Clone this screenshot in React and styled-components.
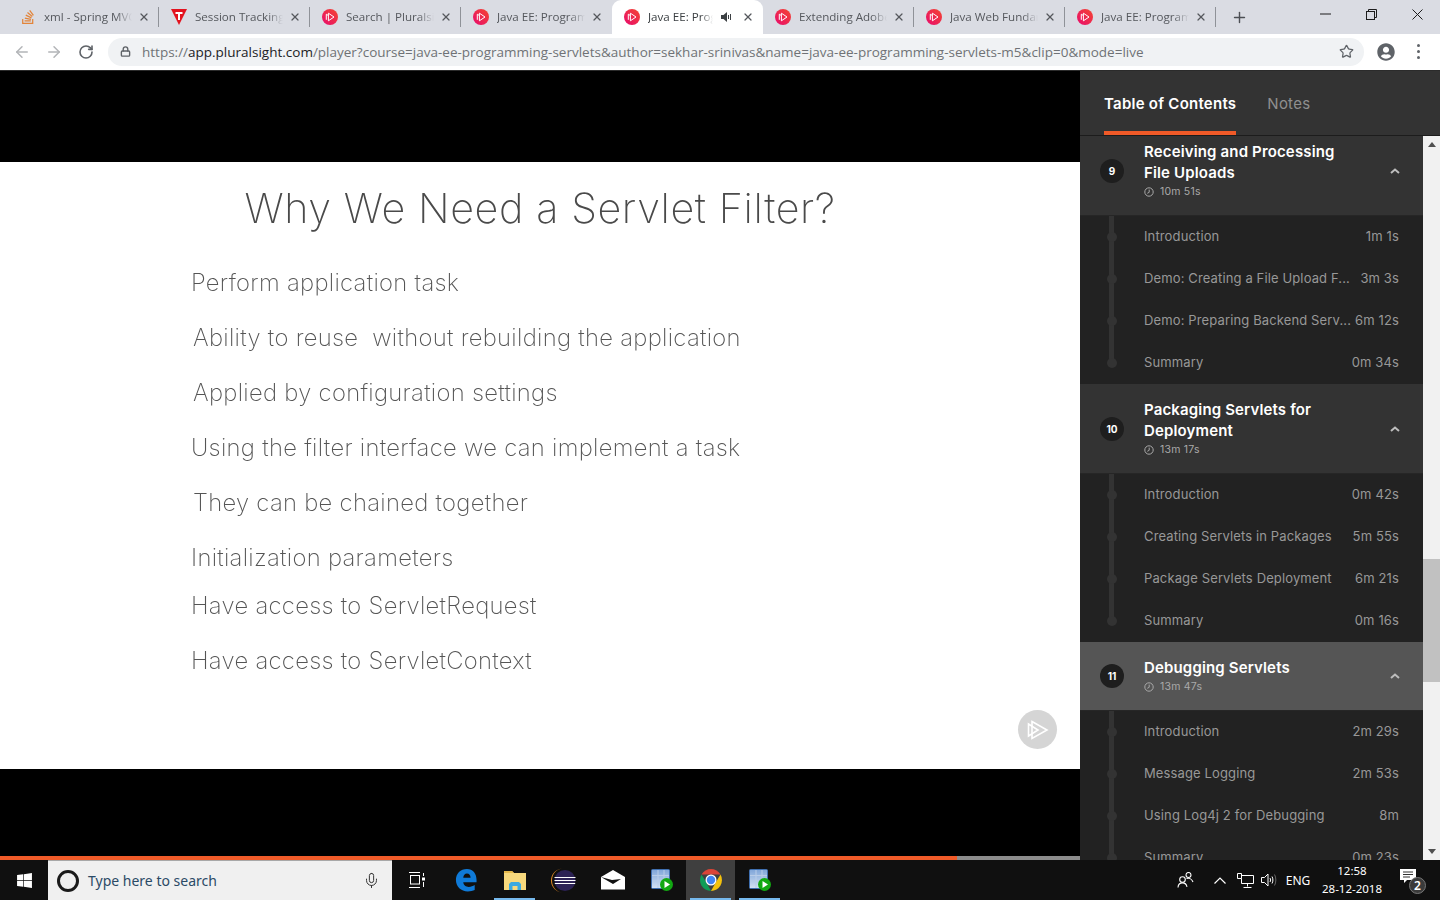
import React from "react";
import styled, { createGlobalStyle } from "styled-components";
import { ArrowLeft, ArrowRight, RotateCw, Lock, Star, Plus, X, Mic } from "lucide-react";
import { FaStackOverflow, FaWindows, FaUserCircle } from "react-icons/fa";

const GlobalStyle = createGlobalStyle`
  html, body {
    margin: 0;
    padding: 0;
    width: 1440px;
    height: 900px;
    overflow: hidden;
    background: #000;
  }
  * { box-sizing: border-box; }
`;

const Page = styled.div`
  width: 1440px;
  height: 900px;
  display: flex;
  flex-direction: column;
`;

/* browser chrome */
const TabStrip = styled.div`
  height: 34px;
  background: #dadce3;
  display: flex;
  padding-left: 8px;
  font-family: "Open Sans", "Noto Sans", sans-serif;
`;

const Tab = styled.div`
  position: relative;
  width: 151px;
  height: 34px;
  flex: none;
  display: flex;
  align-items: center;
  padding-left: 12px;
  background: ${(p) => (p.$active ? "#fff" : "transparent")};
  border-radius: 9px 9px 0 0;
  &::after {
    content: "";
    position: absolute;
    right: 0;
    top: 7px;
    height: 20px;
    width: 1px;
    background: ${(p) => (p.$sep ? "#8f9298" : "transparent")};
  }
`;

const TabIcon = styled.span`
  width: 16px;
  height: 16px;
  flex: none;
  display: flex;
  align-items: center;
  justify-content: center;
`;

const TabTitle = styled.span`
  margin: -2px 0 0 8px;
  width: ${(p) => (p.$active ? "65px" : "88px")};
  font-size: 11.6px;
  color: ${(p) => (p.$active ? "#3c4043" : "#55585d")};
  white-space: nowrap;
  overflow: hidden;
  -webkit-mask-image: linear-gradient(to right, #000 82%, transparent 100%);
  mask-image: linear-gradient(to right, #000 82%, transparent 100%);
`;

const TabAudio = styled.span`
  margin-left: 8px;
  width: 14px;
  display: flex;
`;

const TabClose = styled.span`
  margin-left: ${(p) => (p.$active ? "7px" : "6px")};
  display: flex;
  color: #55585d;
`;

const NewTab = styled.div`
  width: 46px;
  display: flex;
  align-items: center;
  justify-content: center;
  color: #4c4f54;
`;

const WindowControls = styled.div`
  margin-left: auto;
  display: flex;
`;

const WindowButton = styled.div`
  width: 46px;
  height: 28px;
  display: flex;
  align-items: center;
  justify-content: center;
  color: #1c1c1c;
`;

const Toolbar = styled.div`
  height: 37px;
  background: #fff;
  border-bottom: 1px solid #2b2b2b;
  display: flex;
  align-items: center;
  padding: 0 0 1px 6px;
  color: #5f6368;
`;

const NavButton = styled.div`
  width: 32px;
  height: 28px;
  display: flex;
  align-items: center;
  justify-content: center;
  color: ${(p) => (p.$dim ? "#b3b5b8" : "#5f6368")};
`;

const Omnibox = styled.div`
  margin-left: 6px;
  width: 1256px;
  height: 28px;
  border-radius: 14px;
  background: #f0f2f4;
  display: flex;
  align-items: center;
  padding: 0 10px 0 12px;
`;

const Url = styled.div`
  margin-left: 11px;
  font-family: "Open Sans", "Noto Sans", sans-serif;
  font-size: 13.5px;
  color: #6f7276;
  white-space: nowrap;
  b {
    font-weight: 400;
    color: #202124;
  }
`;

const ToolbarEnd = styled.div`
  margin-left: auto;
  display: flex;
  align-items: center;
`;

const ProfileSlot = styled.div`
  margin-left: 6px;
  width: 32px;
  display: flex;
  justify-content: center;
  color: #5f6368;
`;

const MenuDots = styled.div`
  width: 32px;
  display: flex;
  flex-direction: column;
  align-items: center;
  gap: 3px;
  i {
    width: 3px;
    height: 3px;
    border-radius: 50%;
    background: #5f6368;
  }
`;

/* player */
const Main = styled.div`
  flex: 1;
  min-height: 0;
  display: flex;
`;

const Player = styled.div`
  width: 1080px;
  display: flex;
  flex-direction: column;
  background: #000;
`;

const Slide = styled.div`
  position: relative;
  margin-top: 91px;
  height: 607px;
  background: #fff;
  padding-top: 19px;
  font-family: Inter, Lato, sans-serif;
  font-weight: 300;
`;

const SlideTitle = styled.h1`
  margin: 0 0 20px;
  text-align: center;
  font-size: 41.3px;
  line-height: 54px;
  font-weight: 200;
  letter-spacing: 0.6px;
  color: #4a4a4a;
  filter: blur(0.3px);
`;

const Bullet = styled.div`
  height: ${(p) => p.$h || 55}px;
  line-height: 55px;
  padding-left: ${(p) => p.$x}px;
  font-size: 23.8px;
  font-weight: 200;
  letter-spacing: 0.3px;
  color: #555;
  white-space: pre;
  filter: blur(0.3px);
`;

const PlayBadge = styled.div`
  position: absolute;
  right: 23px;
  top: 548px;
  width: 39px;
  height: 39px;
  border-radius: 50%;
  background: #d5d5d5;
  display: flex;
  align-items: center;
  justify-content: center;
`;

const Progress = styled.div`
  margin-top: auto;
  height: 4px;
  background: #8c8c8c;
`;

const ProgressFill = styled.div`
  height: 100%;
  background: #f05a28;
`;

/* sidebar */
const Sidebar = styled.aside`
  width: 360px;
  display: flex;
  flex-direction: column;
  background: #222;
  font-family: Inter, "Noto Sans", sans-serif;
`;

const SideTabs = styled.div`
  height: 65px;
  flex: none;
  background: #333;
  border-bottom: 1px solid #1c1c1c;
  display: flex;
  padding-left: 24px;
  gap: 31px;
`;

const SideTab = styled.div`
  height: 64px;
  line-height: 65px;
  font-size: 15px;
  letter-spacing: 0.25px;
  font-weight: ${(p) => (p.$active ? 600 : 400)};
  color: ${(p) => (p.$active ? "#fff" : "#8f8f8f")};
  border-bottom: 4px solid ${(p) => (p.$active ? "#f05a28" : "transparent")};
`;

const SideBody = styled.div`
  flex: 1;
  min-height: 0;
  display: flex;
`;

const SectionList = styled.div`
  width: 343px;
  overflow: hidden;
`;

const SectionScroll = styled.div`
  margin-top: -10px;
`;

const SectionHead = styled.div`
  height: ${(p) => (p.$lines === 2 ? 90 : 69)}px;
  background: ${(p) => (p.$active ? "#555" : "#333")};
  border-bottom: 1px solid #262626;
  display: flex;
  align-items: center;
  padding-right: 24px;
`;

const SectionBadge = styled.div`
  margin-left: 20px;
  width: 24px;
  height: 24px;
  flex: none;
  border-radius: 50%;
  background: #1e1e1e;
  color: #fff;
  font-size: 10px;
  font-weight: 700;
  display: flex;
  align-items: center;
  justify-content: center;
`;

const SectionText = styled.div`
  margin-left: 20px;
  flex: 1;
`;

const SectionTitle = styled.div`
  font-size: 15px;
  line-height: 21px;
  letter-spacing: 0.15px;
  font-weight: 600;
  color: #fff;
`;

const SectionTime = styled.div`
  height: 18px;
  display: flex;
  align-items: center;
  gap: 6px;
  font-size: 10.5px;
  letter-spacing: 0.2px;
  color: #a9a9a9;
`;

const Chevron = styled.svg`
  flex: none;
  margin-right: -1px;
`;

const LessonRow = styled.div`
  position: relative;
  height: 42px;
  display: flex;
  align-items: center;
  justify-content: space-between;
  padding: 0 24px 2px 64px;
  background: #222;
  font-size: 13px;
  letter-spacing: 0.13px;
  color: #989898;
  white-space: nowrap;
  &::before {
    content: "";
    position: absolute;
    left: 29px;
    top: 0;
    width: 5px;
    height: ${(p) => (p.$last ? "50%" : "100%")};
    background: #333;
  }
  &::after {
    content: "";
    position: absolute;
    left: 27px;
    top: 16px;
    width: 10px;
    height: 10px;
    border-radius: 50%;
    background: #333;
  }
`;

const Scrollbar = styled.div`
  width: 17px;
  background: #f1f1f1;
  display: flex;
  flex-direction: column;
  align-items: center;
`;

const ScrollArrow = styled.div`
  height: 17px;
  flex: none;
  display: flex;
  align-items: center;
  justify-content: center;
`;

const ScrollThumb = styled.div`
  width: 100%;
  height: 123px;
  margin-top: 406px;
  background: #c1c1c1;
`;

const ScrollEnd = styled.div`
  margin-top: auto;
`;

/* windows taskbar */
const Taskbar = styled.div`
  height: 40px;
  flex: none;
  background: #101010;
  display: flex;
  color: #fff;
  font-family: "Noto Sans", "Open Sans", sans-serif;
`;

const StartButton = styled.div`
  width: 48px;
  display: flex;
  align-items: center;
  justify-content: center;
`;

const SearchBox = styled.div`
  width: 344px;
  background: #f0f0f0;
  border-top: 1px solid #a8a8a8;
  display: flex;
  align-items: center;
  padding: 0 12px 0 9px;
  color: #2b4a66;
  font-size: 14px;
`;

const Cortana = styled.div`
  width: 22px;
  height: 22px;
  border-radius: 50%;
  border: 3px solid #1a1a1a;
  margin-right: 9px;
`;

const SearchMic = styled.div`
  margin-left: auto;
  display: flex;
  color: #333;
`;

const Apps = styled.div`
  display: flex;
`;

const AppSlot = styled.div`
  position: relative;
  width: 49px;
  display: flex;
  align-items: center;
  justify-content: center;
  background: ${(p) => (p.$focus ? "#3f3f3f" : "transparent")};
  &::after {
    content: "";
    position: absolute;
    left: ${(p) => (p.$open ? "4px" : "50%")};
    right: ${(p) => (p.$open ? "4px" : "50%")};
    bottom: 0;
    height: 2px;
    background: #76b9ed;
  }
`;

const Tray = styled.div`
  margin-left: auto;
  display: flex;
  align-items: center;
  padding-right: 4px;
  font-size: 12px;
`;

const TraySlot = styled.div`
  width: ${(p) => p.$w}px;
  display: flex;
  justify-content: center;
  align-items: center;
`;

const Clock = styled.div`
  width: 80px;
  text-align: center;
  font-size: 11.5px;
  line-height: 18px;
  margin-top: -1px;
`;

const Notify = styled.div`
  position: relative;
  width: 40px;
  height: 22px;
  margin-left: 4px;
`;

const NotifyCount = styled.span`
  position: absolute;
  left: 13px;
  top: 8px;
  width: 17px;
  height: 17px;
  border-radius: 50%;
  background: #3a3a3a;
  border: 1px solid #777;
  font-size: 12px;
  font-weight: 600;
  line-height: 15px;
  text-align: center;
`;

const PsLogo = ({ id }) => (
  <svg width="16" height="16" viewBox="0 0 16 16">
    <defs>
      <linearGradient id={id} x1="0" y1="1" x2="1" y2="0">
        <stop offset="0" stopColor="#e80a6e" />
        <stop offset="1" stopColor="#f4472f" />
      </linearGradient>
    </defs>
    <circle cx="8" cy="8" r="8" fill={`url(#${id})`} />
    <path d="M6.4 4.2 12 8l-5.6 3.8zM4.3 5.2 6 6.3M4.3 5.2v5.6" fill="none" stroke="#fff" strokeWidth="1" />
  </svg>
);

const TutorialsLogo = () => (
  <svg width="16" height="16" viewBox="0 0 16 16">
    <path d="M0 0h16L8 16z" fill="#e3131f" />
    <path d="M4.5 3h7v2H9v6H7V5H4.5z" fill="#fff" />
  </svg>
);

const Speaker = () => (
  <svg width="12" height="12" viewBox="0 0 12 12" fill="#3c4043">
    <path d="M0 4h2.5L6 1v10L2.5 8H0z" />
    <path d="M7.5 4v4M9.5 3v6" stroke="#3c4043" fill="none" />
  </svg>
);

const TaskView = () => (
  <svg width="18" height="16" viewBox="0 0 18 16" fill="none" stroke="#fff">
    <path d="M1 .5h11M1 15.5h11" />
    <rect x="2.5" y="3.5" width="9" height="8.5" />
    <path d="M15.5 1v3" />
    <rect x="14" y="5.5" width="3" height="3" fill="#fff" stroke="none" />
    <path d="M15.5 10v5" />
  </svg>
);

const EdgeIcon = () => (
  <svg width="22" height="24" viewBox="0 0 24 26">
    <path
      fillRule="evenodd"
      fill="#0f7ad8"
      d="M1 13C1 6 6 1 13 1c6.500 0 10.500 5 10.500 12v2.500H9c.3 3.500 3 5 6 5 2.500 0 4.500-.7 6.500-2v5.500c-2 1-4.500 1.500-7.500 1.500C6.500 25.500 1 20 1 13zM9 10.500h8c0-2.500-1.500-4.500-4-4.500-2.300 0-3.800 2-4 4.500z"
    />
  </svg>
);

const FolderIcon = () => (
  <svg width="24" height="22" viewBox="0 0 24 22">
    <path d="M1 2h8l2 2h12v17H1z" fill="#f7d87c" />
    <path d="M1 2h8l2 2H1z" fill="#e5b84a" />
    <path d="M6 21v-6l2-2h8l2 2v6h-3.500v-4h-5v4z" fill="#3aa9e0" />
  </svg>
);

const EclipseIcon = () => (
  <svg width="25" height="25" viewBox="0 0 25 25">
    <path d="M12 0.500a12 12 0 0 0 0 24a11 12 0 0 1 0-24z" fill="#e58a24" />
    <circle cx="14" cy="12.500" r="10.500" fill="#2c2255" />
    <path d="M3.500 9.500h21M3.500 12.500h21M3.800 15.500h20.400" stroke="#fff" strokeWidth="1.200" />
  </svg>
);

const MailIcon = () => (
  <svg width="24" height="20" viewBox="0 0 24 20">
    <path d="M0 7 12 0l12 7v12.500H0z" fill="#fff" />
    <path d="M0 7l12 7 8-5-9 1z" fill="#111" />
  </svg>
);

const TableApp = ({ id }) => (
  <svg width="22" height="23" viewBox="0 0 22 23">
    <defs>
      <linearGradient id={id} x1="0" y1="0" x2="0" y2="1">
        <stop offset="0" stopColor="#7fa5d8" />
        <stop offset="1" stopColor="#d5e2f3" />
      </linearGradient>
    </defs>
    <rect x="0.500" y="0.500" width="18" height="19" rx="1" fill={`url(#${id})`} stroke="#3f6fb0" />
    <path d="M1 6.500h17M1 12h17M7 1v18M13 1v18" stroke="#b9cde8" />
    <circle cx="15.500" cy="15.500" r="6.500" fill="#12a812" />
    <path d="M13.500 12 19 15.500 13.500 19z" fill="#fff" />
  </svg>
);

const ChromeIcon = () => (
  <svg width="24" height="24" viewBox="0 0 24 24">
    <path d="M2.500 6.500a11 11 0 0 1 19 0H12z" fill="#db4437" />
    <path d="M21.500 6.500A11 11 0 0 1 12 23l5-9z" fill="#f4c20d" />
    <path d="M12 23A11 11 0 0 1 2.500 6.500L7 14z" fill="#0f9d58" />
    <circle cx="12" cy="12" r="5.500" fill="#fff" />
    <circle cx="12" cy="12" r="4.200" fill="#4285f4" />
  </svg>
);

const PeopleIcon = () => (
  <svg width="17" height="16" viewBox="0 0 17 16" fill="none" stroke="#fff" strokeWidth="1.100">
    <circle cx="5.500" cy="7.500" r="2.800" />
    <path d="M1 15.500c.2-2.800 2-4.600 4.500-4.600s4 1.500 4.500 4" />
    <circle cx="11.500" cy="3" r="2.500" />
    <path d="M9.500 6.500c2.800-.8 5.500.8 6.500 3.500" />
  </svg>
);

const NetworkIcon = () => (
  <svg width="17" height="15" viewBox="0 0 17 15" fill="none" stroke="#fff">
    <path d="M4.500 2.500h12v8h-12" />
    <path d="M.5.500h4v5h-4zM4.500 10.500V5.500M10.500 10.500v3M6.500 14.500h8" />
  </svg>
);

const VolumeIcon = () => (
  <svg width="17" height="14" viewBox="0 0 17 14" fill="none" stroke="#fff">
    <path d="M.5 4.500h3l3.500-3.500v12L3.500 9.500h-3z" />
    <path d="M9 5c.7 1.200.7 2.800 0 4M11 3.500c1.200 2 1.200 5 0 7" />
    <path d="M13.500 1.500c1.800 3 1.800 8 0 11" stroke="#666" />
  </svg>
);

const Clockface = ({ stroke }) => (
  <svg width="10" height="10" viewBox="0 0 10 10" fill="none" stroke={stroke}>
    <circle cx="5" cy="5" r="4.200" />
    <path d="M5.200 2.600V5.300L3.300 6.300" />
  </svg>
);

const tabs = [
  { title: "xml - Spring MVC", icon: "so", sep: true },
  { title: "Session Tracking", icon: "tp", sep: true },
  { title: "Search | Pluralsight", icon: "ps", sep: true },
  { title: "Java EE: Programming", icon: "ps" },
  { title: "Java EE: Programming", icon: "ps", active: true },
  { title: "Extending Adobe", icon: "ps", sep: true },
  { title: "Java Web Fundamentals", icon: "ps", sep: true },
  { title: "Java EE: Programming", icon: "ps", sep: true },
];

const bullets = [
  { text: "Perform application task", x: 191 },
  { text: "Ability to reuse  without rebuilding the application", x: 193 },
  { text: "Applied by configuration settings", x: 193 },
  { text: "Using the filter interface we can implement a task", x: 191 },
  { text: "They can be chained together", x: 193 },
  { text: "Initialization parameters", x: 191, h: 48 },
  { text: "Have access to ServletRequest", x: 191 },
  { text: "Have access to ServletContext", x: 191 },
];

const sections = [
  {
    n: 9,
    title: ["Receiving and Processing", "File Uploads"],
    time: "10m 51s",
    lessons: [
      ["Introduction", "1m 1s"],
      ["Demo: Creating a File Upload F...", "3m 3s"],
      ["Demo: Preparing Backend Serv...", "6m 12s"],
      ["Summary", "0m 34s"],
    ],
  },
  {
    n: 10,
    title: ["Packaging Servlets for", "Deployment"],
    time: "13m 17s",
    lessons: [
      ["Introduction", "0m 42s"],
      ["Creating Servlets in Packages", "5m 55s"],
      ["Package Servlets Deployment", "6m 21s"],
      ["Summary", "0m 16s"],
    ],
  },
  {
    n: 11,
    active: true,
    title: ["Debugging Servlets"],
    time: "13m 47s",
    lessons: [
      ["Introduction", "2m 29s"],
      ["Message Logging", "2m 53s"],
      ["Using Log4j 2 for Debugging", "8m"],
      ["Summary", "0m 23s"],
    ],
  },
];

const App = () => (
  <Page>
    <GlobalStyle />
    <TabStrip>
      {tabs.map((t, i) => (
        <Tab key={i} $active={t.active} $sep={t.sep}>
          <TabIcon>
            {t.icon === "so" && <FaStackOverflow size={16} color="#e2843a" />}
            {t.icon === "tp" && <TutorialsLogo />}
            {t.icon === "ps" && <PsLogo id={`ps-${i}`} />}
          </TabIcon>
          <TabTitle $active={t.active}>{t.title}</TabTitle>
          {t.active && (
            <TabAudio>
              <Speaker />
            </TabAudio>
          )}
          <TabClose $active={t.active}>
            <X size={12} strokeWidth={2.5} />
          </TabClose>
        </Tab>
      ))}
      <NewTab>
        <Plus size={17} strokeWidth={2} />
      </NewTab>
      <WindowControls>
        <WindowButton>
          <svg width="11" height="2" viewBox="0 0 11 2">
            <path d="M0 1h11" stroke="currentColor" />
          </svg>
        </WindowButton>
        <WindowButton>
          <svg width="11" height="11" viewBox="0 0 11 11" fill="none" stroke="currentColor">
            <path d="M2.500 2.500V.5h8v8h-2" />
            <rect x=".5" y="2.500" width="8" height="8" />
          </svg>
        </WindowButton>
        <WindowButton>
          <svg width="11" height="11" viewBox="0 0 11 11" stroke="currentColor">
            <path d="M.5.5l10 10M10.500.5l-10 10" />
          </svg>
        </WindowButton>
      </WindowControls>
    </TabStrip>

    <Toolbar>
      <NavButton $dim>
        <ArrowLeft size={18} />
      </NavButton>
      <NavButton $dim>
        <ArrowRight size={18} />
      </NavButton>
      <NavButton>
        <RotateCw size={16} strokeWidth={2.4} />
      </NavButton>
      <Omnibox>
        <Lock size={11} strokeWidth={3} />
        <Url>
          https://<b>app.pluralsight.com</b>
          /player?course=java-ee-programming-servlets&amp;author=sekhar-srinivas&amp;name=java-ee-programming-servlets-m5&amp;clip=0&amp;mode=live
        </Url>
        <ToolbarEnd>
          <Star size={15} strokeWidth={2} />
        </ToolbarEnd>
      </Omnibox>
      <ProfileSlot>
        <FaUserCircle size={18} />
      </ProfileSlot>
      <MenuDots>
        <i />
        <i />
        <i />
      </MenuDots>
    </Toolbar>

    <Main>
      <Player>
        <Slide>
          <SlideTitle>Why We Need a Servlet Filter?</SlideTitle>
          {bullets.map((b) => (
            <Bullet key={b.text} $x={b.x} $h={b.h}>
              {b.text}
            </Bullet>
          ))}
          <PlayBadge>
            <svg width="22" height="22" viewBox="0 0 22 22" fill="none" stroke="#fff" strokeWidth="1.600">
              <path d="M5 2.500 20 11 5 19.500z" />
              <path d="M1.500 5v12L11 11z" />
            </svg>
          </PlayBadge>
        </Slide>
        <Progress>
          <ProgressFill style={{ width: "957px" }} />
        </Progress>
      </Player>

      <Sidebar>
        <SideTabs>
          <SideTab $active>Table of Contents</SideTab>
          <SideTab>Notes</SideTab>
        </SideTabs>
        <SideBody>
          <SectionList>
            <SectionScroll>
              {sections.map((s) => (
                <div key={s.n}>
                  <SectionHead $lines={s.title.length} $active={s.active}>
                    <SectionBadge>{s.n}</SectionBadge>
                    <SectionText>
                      {s.title.map((line) => (
                        <SectionTitle key={line}>{line}</SectionTitle>
                      ))}
                      <SectionTime>
                        <Clockface stroke="#a9a9a9" />
                        {s.time}
                      </SectionTime>
                    </SectionText>
                    <Chevron width="10" height="6" viewBox="0 0 10 6" fill="none" stroke="#bdbdbd" strokeWidth="2">
                      <path d="M1 5l4-3.500L9 5" />
                    </Chevron>
                  </SectionHead>
                  {s.lessons.map(([name, time], i) => (
                    <LessonRow key={name} $last={i === s.lessons.length - 1}>
                      <span>{name}</span>
                      <span>{time}</span>
                    </LessonRow>
                  ))}
                </div>
              ))}
            </SectionScroll>
          </SectionList>
          <Scrollbar>
            <ScrollArrow>
              <svg width="8" height="5" viewBox="0 0 8 5">
                <path d="M4 0l4 5H0z" fill="#505050" />
              </svg>
            </ScrollArrow>
            <ScrollThumb />
            <ScrollEnd>
              <ScrollArrow>
                <svg width="8" height="5" viewBox="0 0 8 5">
                  <path d="M0 0h8L4 5z" fill="#505050" />
                </svg>
              </ScrollArrow>
            </ScrollEnd>
          </Scrollbar>
        </SideBody>
      </Sidebar>
    </Main>

    <Taskbar>
      <StartButton>
        <FaWindows size={17} color="#fff" />
      </StartButton>
      <SearchBox>
        <Cortana />
        Type here to search
        <SearchMic>
          <Mic size={17} strokeWidth={1.4} />
        </SearchMic>
      </SearchBox>
      <Apps>
        <AppSlot>
          <TaskView />
        </AppSlot>
        <AppSlot>
          <EdgeIcon />
        </AppSlot>
        <AppSlot $open>
          <FolderIcon />
        </AppSlot>
        <AppSlot>
          <EclipseIcon />
        </AppSlot>
        <AppSlot>
          <MailIcon />
        </AppSlot>
        <AppSlot>
          <TableApp id="tbl-a" />
        </AppSlot>
        <AppSlot $open $focus>
          <ChromeIcon />
        </AppSlot>
        <AppSlot $open>
          <TableApp id="tbl-b" />
        </AppSlot>
      </Apps>
      <Tray>
        <TraySlot $w={36}>
          <PeopleIcon />
        </TraySlot>
        <TraySlot $w={33}>
          <svg width="12" height="7" viewBox="0 0 12 7" fill="none" stroke="#fff" strokeWidth="1.200">
            <path d="M.5 6.500 6 1l5.500 5.500" />
          </svg>
        </TraySlot>
        <TraySlot $w={18}>
          <NetworkIcon />
        </TraySlot>
        <TraySlot $w={30}>
          <VolumeIcon />
        </TraySlot>
        <TraySlot $w={28}>ENG</TraySlot>
        <Clock>
          12:58
          <br />
          28-12-2018
        </Clock>
        <Notify>
          <svg width="16" height="15" viewBox="0 0 16 15" style={{ marginLeft: "4px" }}>
            <path d="M0 0h16v11H7l-3 3v-3H0z" fill="#fff" />
            <path d="M3 3h10M3 5.500h10M3 8h7" stroke="#333" />
          </svg>
          <NotifyCount>2</NotifyCount>
        </Notify>
      </Tray>
    </Taskbar>
  </Page>
);

export default App;
